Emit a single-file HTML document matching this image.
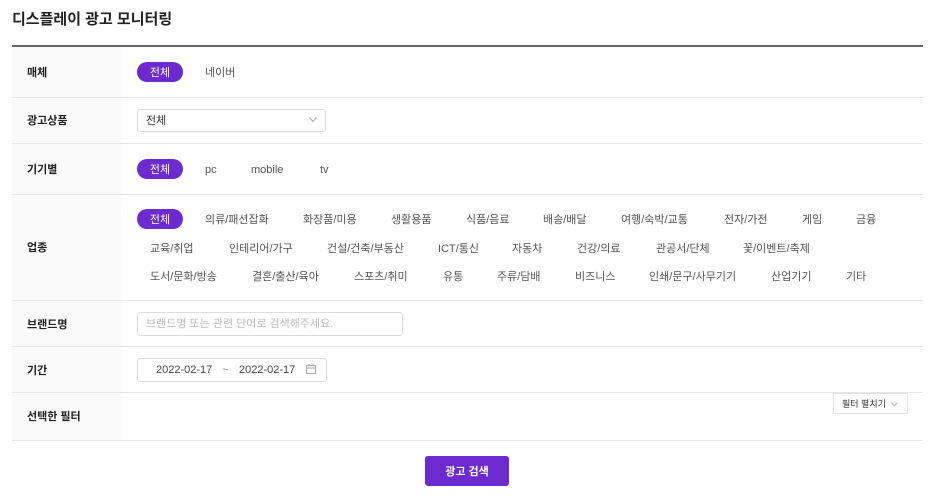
<!DOCTYPE html>
<html><head><meta charset="utf-8"><style>
*{margin:0;padding:0;box-sizing:border-box}
body{width:936px;height:496px;background:#fff;position:relative;overflow:hidden;font-family:"Liberation Sans","Noto Sans CJK KR",sans-serif;color:#333}
.a{position:absolute;white-space:nowrap}
.title{left:12px;top:8px;font-size:15px;font-weight:bold;color:#222}
.lab{position:absolute;left:12px;width:109px;background:#fafafa}
.hl{position:absolute;left:12px;width:911px;height:1px;background:#e6e6e6}
.lt{position:absolute;left:27px;font-size:11px;font-weight:bold;color:#222;line-height:14px;margin-top:1px}
.pill{position:absolute;left:137px;width:46px;height:20px;border-radius:10px;background:#6b2bd1;color:#fff;font-size:11px;display:flex;align-items:center;justify-content:center}
.t{position:absolute;font-size:11px;color:#555;white-space:nowrap;line-height:14px;margin-top:2px}
.box{position:absolute;border:1px solid #ddd;border-radius:3px;background:#fff}
</style></head><body>
<div class="a title">디스플레이 광고 모니터링</div>
<div style="position:absolute;left:12px;top:45px;width:911px;height:2px;background:#666"></div>
<div class="lab" style="top:47px;height:393px"></div>
<div class="hl" style="top:97px"></div>
<div class="hl" style="top:143px"></div>
<div class="hl" style="top:194px"></div>
<div class="hl" style="top:300px"></div>
<div class="hl" style="top:346px"></div>
<div class="hl" style="top:392px"></div>
<div class="hl" style="top:440px"></div>

<div class="lt" style="top:65px">매체</div>
<div class="pill" style="top:62px">전체</div>
<div class="t" style="left:205px;top:64px">네이버</div>

<div class="lt" style="top:113px">광고상품</div>
<div class="box" style="left:137px;top:109px;width:189px;height:23px"></div>
<div class="t" style="left:146px;top:112px;color:#333">전체</div>
<svg class="a" style="left:309px;top:117px" width="8" height="6"><path d="M0.5 0.5L4 4.5L7.5 0.5" fill="none" stroke="#aaa"/></svg>

<div class="lt" style="top:162px">기기별</div>
<div class="pill" style="top:159px">전체</div>
<div class="t" style="left:205px;top:161px">pc</div>
<div class="t" style="left:251px;top:161px">mobile</div>
<div class="t" style="left:320px;top:161px">tv</div>

<div class="lt" style="top:240px">업종</div>
<div class="pill" style="top:209px">전체</div>
<div class="t" style="left:205px;top:211px">의류/패션잡화</div>
<div class="t" style="left:303px;top:211px">화장품/미용</div>
<div class="t" style="left:391px;top:211px">생활용품</div>
<div class="t" style="left:466px;top:211px">식품/음료</div>
<div class="t" style="left:543px;top:211px">배송/배달</div>
<div class="t" style="left:621px;top:211px">여행/숙박/교통</div>
<div class="t" style="left:724px;top:211px">전자/가전</div>
<div class="t" style="left:802px;top:211px">게임</div>
<div class="t" style="left:856px;top:211px">금융</div>
<div class="t" style="left:150px;top:240px">교육/취업</div>
<div class="t" style="left:229px;top:240px">인테리어/가구</div>
<div class="t" style="left:327px;top:240px">건설/건축/부동산</div>
<div class="t" style="left:438px;top:240px">ICT/통신</div>
<div class="t" style="left:512px;top:240px">자동차</div>
<div class="t" style="left:577px;top:240px">건강/의료</div>
<div class="t" style="left:656px;top:240px">관공서/단체</div>
<div class="t" style="left:743px;top:240px">꽃/이벤트/축제</div>
<div class="t" style="left:150px;top:268px">도서/문화/방송</div>
<div class="t" style="left:252px;top:268px">결혼/출산/육아</div>
<div class="t" style="left:354px;top:268px">스포츠/취미</div>
<div class="t" style="left:443px;top:268px">유통</div>
<div class="t" style="left:497px;top:268px">주류/담배</div>
<div class="t" style="left:575px;top:268px">비즈니스</div>
<div class="t" style="left:649px;top:268px">인쇄/문구/사무기기</div>
<div class="t" style="left:771px;top:268px">산업기기</div>
<div class="t" style="left:846px;top:268px">기타</div>

<div class="lt" style="top:317px">브랜드명</div>
<div class="box" style="left:137px;top:312px;width:266px;height:24px"></div>
<div class="t" style="left:146px;top:315px;color:#bbb">브랜드명 또는 관련 단어로 검색해주세요.</div>

<div class="lt" style="top:363px">기간</div>
<div class="box" style="left:137px;top:358px;width:190px;height:24px"></div>
<div class="t" style="left:156px;top:361px;color:#444">2022-02-17</div>
<div class="t" style="left:222px;top:361px;color:#888">~</div>
<div class="t" style="left:239px;top:361px;color:#444">2022-02-17</div>
<svg class="a" style="left:306px;top:364px" width="10" height="10"><rect x="0.5" y="1.5" width="9" height="8" fill="none" stroke="#aaa"/><path d="M0.5 4H9.5M3 0V2.5M7 0V2.5" stroke="#aaa"/></svg>

<div class="lt" style="top:409px">선택한 필터</div>
<div class="box" style="left:833px;top:393px;width:75px;height:21px;border-radius:0;border-color:#e3e3e3"></div>
<div class="t" style="left:842px;top:395px;font-size:9px;color:#333">필터 펼치기</div>
<svg class="a" style="left:891px;top:402px" width="7" height="5"><path d="M0.5 0.5L3.5 4L6.5 0.5" fill="none" stroke="#bbb"/></svg>

<div class="a" style="left:425px;top:456px;width:84px;height:30px;border-radius:3px;background:#6b2bd1;color:#fff;font-size:11px;font-weight:bold;display:flex;align-items:center;justify-content:center">광고 검색</div>
</body></html>
